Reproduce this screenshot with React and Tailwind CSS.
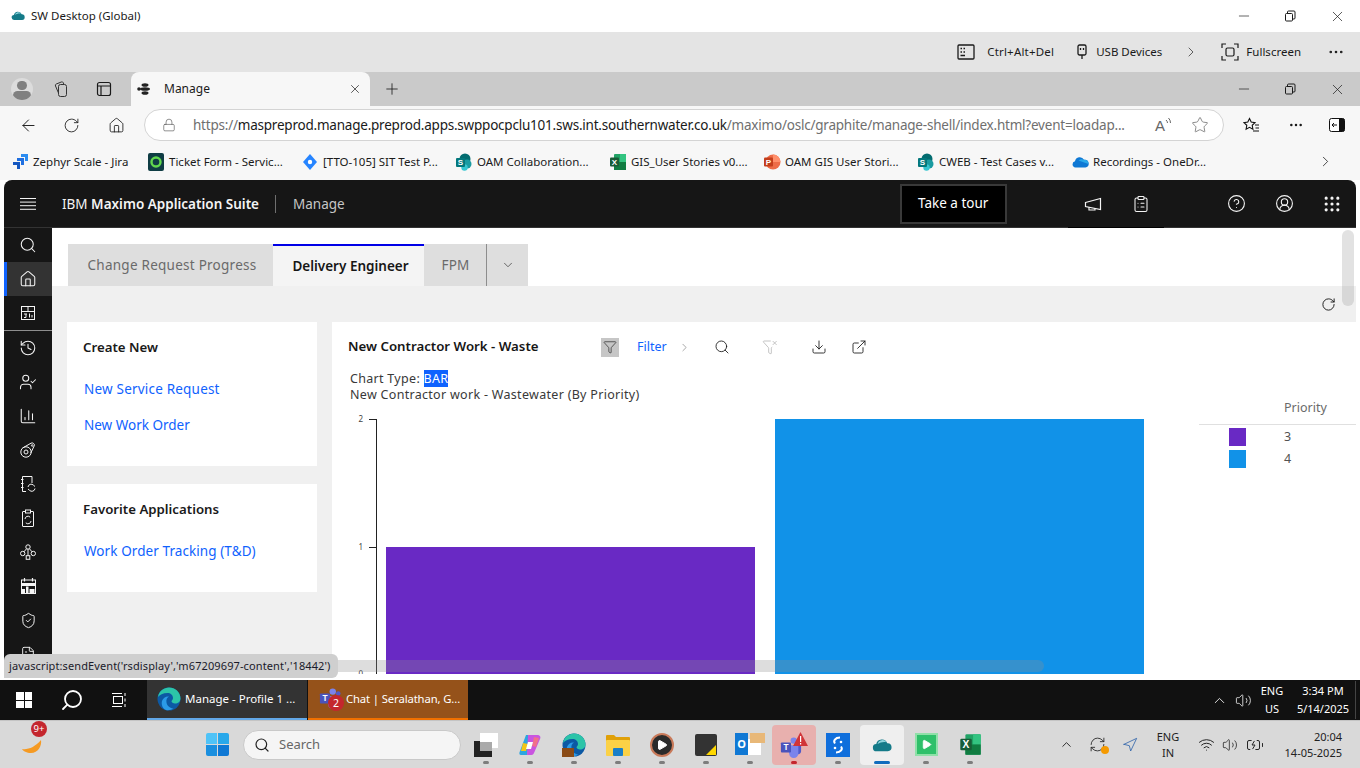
import React from 'react'
import {
  ArrowLeft, RotateCw, House, Lock, Star, Plus, X, Minus, ChevronRight, ChevronDown, ChevronUp,
  Ellipsis, Search, Filter, FunnelX, Download, ExternalLink, CircleHelp, CircleUserRound,
  Grip, ClipboardList, History, UserCheck, ChartColumn,
  ShieldCheck, FileText, Volume2, Wifi, Navigation, RefreshCw, BatteryCharging, Play,
} from 'lucide-react'

const thin = 1.4

// window restore glyph
const RestoreIcon = ({ className = '' }) => (
  <svg width="12" height="12" viewBox="0 0 12 12" fill="none" stroke="currentColor" className={className}>
    <rect x="1.5" y="3.5" width="7" height="7.5" rx="1" />
    <path d="M3.5 3.5V2a1 1 0 0 1 1-1H10a1 1 0 0 1 1 1v6a1 1 0 0 1-1 1H8.5" />
  </svg>
)

const WinButtons = ({ className = '' }) => (
  <div className={`flex items-center ${className}`}>
    <Minus size={16} strokeWidth={1} className="mr-[32px]" />
    <RestoreIcon className="mr-[33px]" />
    <X size={17} strokeWidth={1} />
  </div>
)

const SharePoint = () => (
  <svg width="18" height="18" viewBox="0 0 18 18">
    <circle cx="10" cy="6" r="5.5" fill="#036c70" />
    <circle cx="12" cy="11" r="4.5" fill="#1a9ba1" />
    <circle cx="9.5" cy="14.5" r="3.2" fill="#37c6d0" />
    <rect x="1" y="5" width="9" height="9" rx="1" fill="#03787c" />
    <text x="5.5" y="12.2" fontSize="8" fontWeight="700" fill="#fff" textAnchor="middle" fontFamily="Liberation Sans">S</text>
  </svg>
)

const ExcelIcon = ({ size = 18 }) => (
  <svg width={size} height={size} viewBox="0 0 18 18">
    <rect x="5" y="1" width="12" height="16" rx="1" fill="#21a366" />
    <rect x="11" y="1" width="6" height="8" fill="#33c481" />
    <rect x="5" y="9" width="12" height="8" fill="#107c41" />
    <rect x="1" y="4.5" width="9" height="9" rx="1" fill="#185c37" />
    <text x="5.5" y="12" fontSize="8" fontWeight="700" fill="#fff" textAnchor="middle" fontFamily="Liberation Sans">X</text>
  </svg>
)

const PptIcon = () => (
  <svg width="18" height="18" viewBox="0 0 18 18">
    <circle cx="10" cy="9" r="7.5" fill="#ed6c47" />
    <path d="M10 1.5A7.5 7.5 0 0 1 17.5 9H10z" fill="#ff8f6b" />
    <rect x="1" y="4.5" width="9" height="9" rx="1" fill="#c43e1c" />
    <text x="5.5" y="12" fontSize="8" fontWeight="700" fill="#fff" textAnchor="middle" fontFamily="Liberation Sans">P</text>
  </svg>
)

const Bookmark = ({ icon, label, first }) => (
  <div className={`flex items-center shrink-0 ${first ? 'w-[136px]' : 'w-[154px]'}`}>
    <div className="w-[18px] h-[18px] mr-[4px] flex items-center justify-center shrink-0">{icon}</div>
    <span className="text-[11.5px] text-[#1a1a1a] whitespace-nowrap">{label}</span>
  </div>
)

const bookmarks = [
  {
    label: 'Zephyr Scale - Jira',
    icon: (
      <svg width="17" height="17" viewBox="0 0 17 17" fill="#1f6fe0">
        <path d="M9 1h7v7h-3V4H9z" fill="#2b8cf0" />
        <path d="M5 5h7v7H9V8H5z" />
        <path d="M1 9h7v7H5v-4H1z" fill="#1557c0" />
      </svg>
    ),
  },
  {
    label: 'Ticket Form - Servic...',
    icon: (
      <svg width="16" height="18" viewBox="0 0 16 18">
        <rect width="16" height="18" rx="2" fill="#0f3d44" />
        <circle cx="8" cy="9" r="4.5" fill="none" stroke="#62d84e" strokeWidth="2.4" />
      </svg>
    ),
  },
  {
    label: '[TTO-105] SIT Test P...',
    icon: (
      <svg width="16" height="18" viewBox="0 0 16 18">
        <path d="M8 1l7 8-7 8-7-8z" fill="#2684ff" />
        <circle cx="8" cy="9" r="2.2" fill="#fff" />
      </svg>
    ),
  },
  { label: 'OAM Collaboration...', icon: <SharePoint /> },
  { label: 'GIS_User Stories v0....', icon: <ExcelIcon /> },
  { label: 'OAM GIS User Stori...', icon: <PptIcon /> },
  { label: 'CWEB - Test Cases v...', icon: <SharePoint /> },
  {
    label: 'Recordings - OneDr...',
    icon: (
      <svg width="17" height="12" viewBox="0 0 17 12">
        <path d="M3.5 11.5A3.2 3.2 0 0 1 3 5.2 4.8 4.8 0 0 1 12 3.8a3.9 3.9 0 0 1 1.5 7.7z" fill="#0f78d4" />
        <path d="M6.5 4.5A4.8 4.8 0 0 1 12 3.8 3.9 3.9 0 0 1 16.5 8z" fill="#29a8ea" />
      </svg>
    ),
  },
]

const sideTop = [
  <Search size={18} strokeWidth={thin} />,
  <House size={18} strokeWidth={thin} />,
  <svg width="16" height="16" viewBox="0 0 16 16" fill="none" stroke="currentColor">
    <rect x="1.5" y="1.5" width="13" height="13" />
    <path d="M1.5 6.5h13M8 1.5v5" />
    <path d="M4 9h3M6 9v3.5H4M9.5 8.5v4M12 10v2.5" />
  </svg>,
]

const GearCam = () => (
  <svg width="18" height="18" viewBox="0 0 18 18" fill="none" stroke="currentColor">
    <circle cx="7" cy="11" r="5.2" />
    <circle cx="7" cy="11" r="2" />
    <path d="M3.5 7L12 2.2a2.3 2.3 0 0 1 3.4 2.2L11.8 12" />
    <circle cx="13.2" cy="4.5" r="0.8" />
  </svg>
)

const BookSync = () => (
  <svg width="16" height="18" viewBox="0 0 16 18" fill="none" stroke="currentColor">
    <path d="M6 16.5H2.5v-15H12V8" />
    <path d="M1 4.5h2.5M1 8.5h2.5M1 12.5h2.5" />
    <path d="M8 12a3.2 3.2 0 0 1 5.5-1.8L15 11.5M15 13.5a3.2 3.2 0 0 1-5.5 1.8L8 14" />
  </svg>
)

const ClipSync = () => (
  <svg width="14" height="18" viewBox="0 0 14 18" fill="none" stroke="currentColor">
    <rect x="1.5" y="2.5" width="11" height="15" rx="0.5" />
    <rect x="4.5" y="1" width="5" height="3" fill="#161616" />
    <path d="M4 10a3 3 0 0 1 5.2-1.8M10 12a3 3 0 0 1-5.2 1.8" />
  </svg>
)

// org tree: circles around a small square
const TreeIcon = () => (
  <svg width="16" height="16" viewBox="0 0 16 16" fill="none" stroke="currentColor">
    <circle cx="8" cy="3" r="2.2" />
    <circle cx="2.7" cy="9.5" r="2.2" />
    <circle cx="13.3" cy="9.5" r="2.2" />
    <rect x="6.200" y="11.700" width="3.600" height="3.600" />
    <path d="M6.500 4.800L4 7.800M9.500 4.800L12 7.800M8 5.200v6.500" />
  </svg>
)

// calendar with filled cells
const CalFilled = () => (
  <svg width="15" height="16" viewBox="0 0 15 16">
    <rect x="0.500" y="2" width="14" height="13.500" fill="none" stroke="#f4f4f4" />
    <path d="M3.500 0v3.500M11.500 0v3.500" stroke="#f4f4f4" strokeWidth="1.200" />
    <path d="M1 5h13v3H1zM1 11h3v4H1zM5 8.500h2.500V15H5zM8.500 11h5v4h-5z" fill="#f4f4f4" />
  </svg>
)

const sideBottom = [
  <History size={18} strokeWidth={thin} />,
  <UserCheck size={18} strokeWidth={thin} />,
  <ChartColumn size={18} strokeWidth={thin} />,
  <GearCam />,
  <BookSync />,
  <ClipSync />,
  <TreeIcon />,
  <CalFilled />,
  <ShieldCheck size={17} strokeWidth={thin} />,
  <FileText size={16} strokeWidth={thin} />,
]

const SideItem = ({ children, active }) => (
  <div className={`h-[34px] flex items-center justify-center text-[#f4f4f4] ${active ? 'bg-[#333333] border-l-[3px] border-[#0f62fe] pr-[3px]' : ''}`}>
    {children}
  </div>
)

const TrayDot = ({ red, blue }) => (
  <span className={`absolute left-1/2 -translate-x-1/2 bottom-[1px] h-[3px] rounded-full ${red ? 'w-[6px] bg-[#c4262e]' : blue ? 'w-[16px] bg-[#0f6cbd]' : 'w-[6px] bg-[#7d7d7d]'}`} />
)

const Pinned = ({ children, tint, active, red, blue }) => (
  <div className={`relative w-[44px] h-[40px] flex items-center justify-center rounded-[4px] ${tint ? 'bg-[#e8b0ae]' : ''} ${active ? 'bg-[#efefef]' : ''}`}>
    {children}
    <TrayDot red={red} blue={blue} />
  </div>
)

const EdgeLogo = ({ size = 24 }) => (
  <svg width={size} height={size} viewBox="0 0 24 24">
    <circle cx="12" cy="12" r="11.5" fill="#0c59a4" />
    <path d="M1 10C2 4 7 .5 12 .5c6 0 11.5 4.5 11.5 11 0 3-2.5 5-5.5 5-2 0-3.5-1-3.5-2.2 0-1 1.5-1.3 1.5-3.3C16 8 13.5 6 10.5 6 6 6 2.5 8 1 10z" fill="#2cc4a8" />
    <path d="M9 23c-3-1-5-5-4-9 1-3 4-5 7-4.5-2 1-3 3-2.5 6 .5 3.500 4 6 7 6-2 1.500-5 2-7.500 1.500z" fill="#2b9be8" />
  </svg>
)

const TeamsIcon = ({ size = 24 }) => (
  <svg width={size} height={size} viewBox="0 0 24 24">
    <circle cx="15" cy="5" r="3.5" fill="#7b83eb" />
    <circle cx="21" cy="7" r="2.500" fill="#5059c9" />
    <path d="M18 10h5v7a3 3 0 0 1-5 2z" fill="#5059c9" />
    <path d="M8 10h12v9a5 5 0 0 1-10 0z" fill="#7b83eb" />
    <rect x="1" y="7" width="11" height="11" rx="1" fill="#4b53bc" />
    <text x="6.5" y="15.800" fontSize="9" fontWeight="700" fill="#fff" textAnchor="middle" fontFamily="Liberation Sans">T</text>
  </svg>
)

const WinLogo = ({ size, gradient }) => (
  <div className="grid grid-cols-2 gap-[1px]" style={{ width: size, height: size }}>
    <span className={gradient ? 'bg-[#4fc3f7] rounded-tl-[2px]' : 'bg-white'} />
    <span className={gradient ? 'bg-[#29a8ea] rounded-tr-[2px]' : 'bg-white'} />
    <span className={gradient ? 'bg-[#1a8fdf] rounded-bl-[2px]' : 'bg-white'} />
    <span className={gradient ? 'bg-[#0f78d4] rounded-br-[2px]' : 'bg-white'} />
  </div>
)

const SwCloud = ({ w = 22 }) => (
  <svg width={w} height={w * 0.8} viewBox="0 0 22 18">
    <path d="M5 16a4 4 0 0 1-.5-8A6.500 6.500 0 0 1 17 7a4.500 4.500 0 0 1 .5 9z" fill="#147a88" />
    <path d="M6 8a5.500 5.500 0 0 1 10-2c-3-1-7 0-10 2z" fill="#8fd4dd" />
  </svg>
)

export default function App() {
  return (
    <div className="relative w-[1360px] h-[768px] overflow-hidden bg-white flex flex-col font-['Noto_Sans',sans-serif] text-[#1a1a1a]">
      {/* remote desktop title */}
      <div className="h-[32px] shrink-0 flex items-center pl-[11px] pr-[14px] bg-white">
        <div className="w-[14px] h-[14px] mr-[6px] flex items-center">
          <SwCloud w={14} />
        </div>
        <span className="text-[11.5px]">SW Desktop (Global)</span>
        <WinButtons className="ml-auto" />
      </div>

      {/* remote desktop toolbar */}
      <div className="h-[40px] shrink-0 bg-[#e4e4e4] flex items-center justify-end text-[11.5px] pr-[15px]">
        <svg width="18" height="16" viewBox="0 0 18 16" fill="none" stroke="currentColor" strokeWidth="1.300" className="mr-[12px]">
          <rect x="1" y="1" width="16" height="14" rx="1" />
          <path d="M3.500 4.500h1.500M6.500 4.500H8M3.500 8h1.500M6.500 8H8M3.500 11.500H8" />
        </svg>
        <span className="mr-[23px] tracking-[0.2px]">Ctrl+Alt+Del</span>
        <svg width="10" height="16" viewBox="0 0 10 16" fill="none" stroke="currentColor" strokeWidth="1.300" className="mr-[9px]">
          <rect x="1" y="1" width="8" height="10" rx="1.500" />
          <path d="M3.500 4v2M6.500 4v2M5 11v4" />
        </svg>
        <span className="mr-[21px]">USB Devices</span>
        <ChevronRight size={16} strokeWidth={1} className="mr-[22px]" />
        <svg width="18" height="18" viewBox="0 0 18 18" fill="none" stroke="currentColor" strokeWidth="1.200" className="mr-[7px]">
          <path d="M1 5V1h4M13 1h4v4M1 13v4h4M13 17h4v-4" />
          <rect x="5" y="5" width="8" height="8" rx="1.500" />
        </svg>
        <span className="mr-[26px]">Fullscreen</span>
        <Ellipsis size={18} strokeWidth={1.500} />
      </div>

      {/* edge tab strip */}
      <div className="h-[34px] shrink-0 bg-[#cacaca] flex items-end pl-[11px] pr-[14px]">
        <div className="h-[34px] flex items-center">
          <div className="w-[22px] h-[22px] rounded-full bg-[#dcdcdc] overflow-hidden flex flex-col items-center">
            <span className="w-[10px] h-[10px] rounded-full bg-[#808080] mt-[3px]" />
            <span className="w-[18px] h-[10px] rounded-full bg-[#808080] mt-[1px]" />
          </div>
          <svg width="18" height="18" viewBox="0 0 18 18" fill="none" stroke="#333" className="ml-[20px]">
            <rect x="5.500" y="4.500" width="8" height="12" rx="2" />
            <path d="M5.500 13L2.500 6a1.500 1.500 0 0 1 .8-2l5-2a1.500 1.500 0 0 1 2 .8l.6 1.500" />
          </svg>
          <svg width="16" height="16" viewBox="0 0 16 16" fill="none" stroke="#1a1a1a" strokeWidth="1.200" className="ml-[25px]">
            <rect x="1.500" y="1.500" width="13" height="13" rx="2" />
            <path d="M1.500 5h13M5 5v9.500" />
          </svg>
        </div>
        <div className="ml-[19px] w-[239px] h-[34px] bg-[#f7f7f7] rounded-t-[8px] flex items-center pl-[6px] pr-[8px]">
          <svg width="16" height="14" viewBox="0 0 16 14" fill="#222" className="mr-[11px]">
            <ellipse cx="8" cy="3" rx="3.500" ry="1.800" />
            <ellipse cx="8" cy="7" rx="5" ry="1.800" />
            <ellipse cx="8" cy="11" rx="3.500" ry="1.800" />
            <circle cx="2" cy="7" r="1.800" />
          </svg>
          <span className="text-[12px]">Manage</span>
          <X size={14} strokeWidth={1.200} className="ml-auto" />
        </div>
        <div className="h-[34px] flex items-center ml-[13px]">
          <Plus size={18} strokeWidth={1.100} />
        </div>
        <div className="h-[34px] flex items-center ml-auto">
          <WinButtons />
        </div>
      </div>

      {/* address bar */}
      <div className="h-[38px] shrink-0 bg-[#f7f7f7] flex items-center pl-[19px]">
        <ArrowLeft size={19} strokeWidth={1.200} className="mr-[25px]" />
        <RotateCw size={17} strokeWidth={1.200} className="mr-[28px]" />
        <House size={17} strokeWidth={1.200} className="mr-[19px]" />
        <div className="w-[1080px] h-[32px] rounded-full bg-white border border-[#d4d4d4] flex items-center pl-[17px] pr-[14px]">
          <Lock size={14} strokeWidth={1.100} className="text-[#555] mr-[17px] shrink-0" />
          <div className="text-[13.5px] whitespace-nowrap text-[#6f6f6f] tracking-[-0.22px]">
            https://<span className="text-[#1a1a1a]">maspreprod.manage.preprod.apps.swppocpclu101.sws.int.southernwater.co.uk</span>/maximo/oslc/graphite/manage-shell/index.html?event=loadap...
          </div>
          <div className="ml-auto flex items-center shrink-0 text-[#666]">
            <span className="text-[15px] leading-none font-['Liberation_Sans',sans-serif]">A</span>
            <svg width="7" height="12" viewBox="0 0 7 12" fill="none" stroke="currentColor" className="mb-[4px] mr-[19px]">
              <path d="M1 3a4 4 0 0 1 1.500 3M3.500 1a7 7 0 0 1 2 5" />
            </svg>
            <Star size={18} strokeWidth={1} />
          </div>
        </div>
        <div className="flex items-center ml-[19px]">
          <svg width="17" height="17" viewBox="0 0 17 17" fill="none" stroke="#111" strokeWidth="1.100" className="mr-[28px]">
            <path d="M6.500 1.500l1.700 3.600 3.800.5-2.800 2.700.7 3.900-3.400-1.900-3.400 1.900.7-3.900L1 5.600l3.800-.5z" />
            <path d="M12 8h4M12.500 11h3.500M10 14h6" />
          </svg>
          <Ellipsis size={16} strokeWidth={1.800} className="mr-[25px]" />
          <svg width="16" height="14" viewBox="0 0 16 14">
            <rect x="0.500" y="0.500" width="15" height="13" rx="2" fill="#fff" stroke="#111" />
            <path d="M10 0.500h4a1.500 1.500 0 0 1 1.500 1.500v10a1.500 1.500 0 0 1-1.500 1.500h-4z" fill="#111" />
            <path d="M3 7h5M5 5L3 7l2 2" fill="none" stroke="#111" />
          </svg>
        </div>
      </div>

      {/* bookmarks */}
      <div className="h-[36px] shrink-0 bg-[#f7f7f7] flex items-center pl-[11px] pb-[1px]">
        {bookmarks.map((b, i) => (
          <Bookmark key={b.label} icon={b.icon} label={b.label} first={i === 0} />
        ))}
        <ChevronRight size={17} strokeWidth={1.100} className="ml-[92px]" />
      </div>

      {/* the Maximo window */}
      <div className="h-[494px] shrink-0 px-[4px] bg-white">
        <div className="h-[48px] bg-[#161616] rounded-t-[8px] flex items-center text-[#f4f4f4] border-b border-[#333333]">
          <div className="w-[48px] flex justify-center">
            <svg width="16" height="12" viewBox="0 0 16 12" stroke="currentColor">
              <path d="M0 .5h16M0 4.100h16M0 7.700h16M0 11.300h16" />
            </svg>
          </div>
          <div className="ml-[10px] text-[13.5px] pt-[1px]">
            IBM <span className="font-semibold">Maximo Application Suite</span>
          </div>
          <div className="w-px h-[18px] bg-[#6f6f6f] mx-[16px]" />
          <div className="text-[13.5px] pt-[1px] ml-px text-[#c6c6c6]">Manage</div>
          <div className="ml-[555px] w-[107px] h-[40px] bg-black border-2 border-[#393939] flex items-center justify-center text-[13.5px] text-white">
            Take a tour
          </div>
          <svg width="18" height="14" viewBox="0 0 18 14" fill="none" stroke="currentColor" strokeWidth="1.200" className="ml-[77px]">
            <path d="M1.500 5.500L16.500 1.500V12.500L1.500 9.500z" />
            <path d="M5 10.300V13h6v-1.800" />
          </svg>
          <ClipboardList size={18} strokeWidth={thin} className="ml-[30px]" />
          <CircleHelp size={19} strokeWidth={thin} className="ml-[77px]" />
          <CircleUserRound size={19} strokeWidth={thin} className="ml-[29px]" />
          <Grip size={20} strokeWidth={1.800} className="ml-[28px]" />
        </div>

        <div className="h-[446px] flex overflow-hidden">
          <div className="w-[48px] shrink-0 bg-[#161616]">
            <div className="border-b border-[#8d8d8d]">
              {sideTop.map((icon, i) => (
                <SideItem key={i} active={i === 1}>{icon}</SideItem>
              ))}
            </div>
            {sideBottom.map((icon, i) => (
              <SideItem key={i}>{icon}</SideItem>
            ))}
          </div>

          <div className="flex-1 min-w-0 flex flex-col">
            {/* page tabs */}
            <div className="h-[58px] shrink-0 pt-[16px] pl-[16px] bg-white flex">
              <div className="w-[205px] pl-[3px] bg-[#dedede] flex items-center justify-center text-[13.5px] text-[#6a6a6a] tracking-[0.25px]">
                Change Request Progress
              </div>
              <div className="w-[151px] pl-[4px] bg-[#f4f4f4] border-t-2 border-[#0000e6] flex items-center justify-center text-[13.5px] font-semibold text-[#161616]">
                Delivery Engineer
              </div>
              <div className="w-[62px] pl-px bg-[#dedede] flex items-center justify-center text-[13.5px] text-[#6a6a6a] tracking-[0.2px]">
                FPM
              </div>
              <div className="w-[42px] bg-[#dedede] border-l border-[#8d8d8d] flex items-center justify-center text-[#333]">
                <ChevronDown size={14} strokeWidth={1.200} />
              </div>
            </div>
            {/* refresh strip */}
            <div className="h-[36px] shrink-0 bg-[#f0f0f0] flex items-center justify-end pr-[20px]">
              <RotateCw size={15} strokeWidth={1.500} className="text-[#161616]" />
            </div>

            <div className="flex-1 min-h-0 flex">
              <div className="w-[280px] shrink-0 bg-[#f0f0f0] pl-[15px] pr-[15px] flex flex-col gap-[18px]">
                <div className="h-[144px] bg-white pl-[16px] pt-[17px]">
                  <div className="text-[13.25px] font-semibold leading-[16px]">Create New</div>
                  <div className="mt-[26px] ml-px text-[13.5px] leading-[16px] text-[#0f62fe] tracking-[0.2px]">New Service Request</div>
                  <div className="mt-[20px] ml-px text-[13.5px] leading-[16px] text-[#0f62fe]">New Work Order</div>
                </div>
                <div className="h-[108px] bg-white pl-[16px] pt-[17px]">
                  <div className="text-[13.25px] font-semibold leading-[16px]">Favorite Applications</div>
                  <div className="mt-[26px] ml-px text-[13.5px] leading-[16px] text-[#0f62fe] tracking-[0.08px]">Work Order Tracking (T&amp;D)</div>
                </div>
              </div>

              <div className="flex-1 min-w-0 bg-white">
                <div className="h-[50px] flex items-center pl-[16px]">
                  <div className="w-[253px] text-[13.25px] font-semibold text-[#161616] whitespace-nowrap">New Contractor Work - Waste</div>
                  <div className="w-[18px] h-[19px] bg-[#c6c6c6] flex items-center justify-center">
                    <Filter size={14} strokeWidth={1.100} />
                  </div>
                  <span className="ml-[18px] text-[12.5px] text-[#0f62fe]">Filter</span>
                  <ChevronRight size={13} strokeWidth={1.400} className="ml-[11px] text-[#8d8d8d]" />
                  <Search size={16} strokeWidth={1.300} className="ml-[23px]" />
                  <FunnelX size={16} strokeWidth={1} className="ml-[32px] text-[#a8a8a8]" />
                  <Download size={16} strokeWidth={1.300} className="ml-[33px]" />
                  <ExternalLink size={16} strokeWidth={1.300} className="ml-[24px]" />
                </div>
                <div className="-mt-px pl-[18px] text-[12.5px] leading-[16px] text-[#393939] h-[32px] tracking-[0.3px]">
                  <div>Chart Type: <span className="bg-[#0f62fe] text-white">BAR</span></div>
                  <div>New Contractor work - Wastewater (By Priority)</div>
                </div>
                <div className="flex mt-[9px]">
                  <svg width="867" height="262" viewBox="0 0 867 262" className="shrink-0">
                    <path d="M44.500 7V262M37 7.500h7.500M37 135.500h7.500" fill="none" stroke="#222" />
                    <text x="31" y="10" fontSize="8" fill="#444" textAnchor="end" fontFamily="Noto Sans">2</text>
                    <text x="31" y="138" fontSize="8" fill="#444" textAnchor="end" fontFamily="Noto Sans">1</text>
                    <text x="31" y="265" fontSize="8" fill="#444" textAnchor="end" fontFamily="Noto Sans">0</text>
                    <rect x="54" y="135" width="369" height="127" fill="#6929c4" />
                    <rect x="443" y="7" width="369" height="255" fill="#1192e8" />
                  </svg>
                  <div className="flex-1 min-w-0 -mt-[13px]">
                    <div className="h-[26px] pl-[85px] border-b border-[#e0e0e0] text-[12.5px] text-[#6a6a6a]">Priority</div>
                    <div className="mt-[1px] pl-[30px] flex items-center h-[22px] text-[12.5px] text-[#525252]">
                      <span className="w-[17px] h-[18px] bg-[#6929c4] mr-[38px]" />3
                    </div>
                    <div className="pl-[30px] flex items-center h-[22px] text-[12.5px] text-[#525252]">
                      <span className="w-[17px] h-[18px] bg-[#1192e8] mr-[38px]" />4
                    </div>
                  </div>
                </div>
              </div>
            </div>
          </div>
        </div>
      </div>

      {/* spacer under the window */}
      <div className="h-[6px] shrink-0 bg-white" />

      {/* inner taskbar */}
      <div className="h-[40px] shrink-0 bg-[#111111] flex items-stretch text-white">
        <div className="flex items-center pl-[16px]">
          <WinLogo size={16} />
          <Search size={24} strokeWidth={1.800} className="ml-[28px] -scale-x-100" />
          <svg width="16" height="16" viewBox="0 0 16 16" fill="none" stroke="#fff" className="ml-[28px]">
            <rect x="1.500" y="4.500" width="9" height="7" />
            <path d="M0 1.500h10M0 14.500h10M13 1v3M13 6.500v3M13 12v3" />
          </svg>
        </div>
        <div className="ml-[19px] w-[160px] bg-[#333333] border-b-2 border-[#62a8e8] flex items-center pl-[10px]">
          <EdgeLogo size={24} />
          <span className="ml-[4px] text-[11.5px] whitespace-nowrap">Manage - Profile 1 ...</span>
        </div>
        <div className="ml-px w-[160px] bg-[#95521a] border-b-2 border-[#f07000] flex items-center pl-[11px]">
          <div className="relative w-[24px] h-[24px] shrink-0">
            <TeamsIcon size={22} />
            <span className="absolute left-[9px] top-[8px] w-[16px] h-[16px] rounded-full bg-[#c4262e] text-[10.5px] leading-[16px] text-center">2</span>
          </div>
          <span className="ml-[3px] text-[11.25px] tracking-[-0.1px] whitespace-nowrap">Chat | Seralathan, G...</span>
        </div>
        <div className="ml-auto flex items-center pr-[5px] border-r border-[#444] my-[1px] mr-[4px]">
          <ChevronUp size={17} strokeWidth={1.200} />
          <Volume2 size={17} strokeWidth={1.100} className="ml-[7px]" />
          <div className="ml-[5px] w-[30px] text-center text-[11px] leading-[18px]">ENG<br />US</div>
          <div className="ml-[9px] w-[54px] text-center text-[11px] leading-[18px]">3:34 PM<br />5/14/2025</div>
        </div>
      </div>

      {/* outer windows taskbar */}
      <div className="h-[48px] shrink-0 bg-[#d9d9d9] border-t border-[#c4c4c4] flex items-center text-[#222]">
        <div className="relative ml-[20px] w-[24px] h-[24px] -mt-[2px]">
          <svg width="24" height="24" viewBox="0 0 24 24">
            <path d="M21 8c1 6-3 13-10 13-4 0-8-2-9-4 6 1 13-2 19-9z" fill="#f59a23" />
          </svg>
          <span className="absolute left-[11px] -top-[11px] w-[16px] h-[16px] rounded-full bg-[#c4262e] text-white text-[9.500px] leading-[16px] text-center">9+</span>
        </div>
        <div className="ml-[162px]">
          <WinLogo size={23} gradient />
        </div>
        <div className="ml-[14px] w-[218px] h-[30px] rounded-full bg-[#f5f5f5] border border-[#c9c9c9] flex items-center pl-[10px]">
          <Search size={16} strokeWidth={1.800} className="text-[#222]" />
          <span className="ml-[9px] text-[13px] text-[#666]">Search</span>
        </div>

        <div className="ml-[3px] flex items-center">
          <Pinned>
            <div className="relative w-[24px] h-[24px]">
              <span className="absolute left-0 bottom-0 w-[18px] h-[16px] bg-[#222]" />
              <span className="absolute right-0 top-0 w-[18px] h-[15px] bg-white" />
              <span className="absolute left-[6px] top-[9px] w-[12px] h-[9px] bg-[#aaa]" />
            </div>
          </Pinned>
          <Pinned>
            <svg width="24" height="24" viewBox="0 0 24 24">
              <path d="M8 2h6l-5 20H3c-2 0-2-2-1-4z" fill="#2ca6e0" />
              <path d="M10 2h9c3 0 4 2 3 4l-6 14c-1 2-2 2-4 2H9z" fill="#c955e0" />
              <path d="M5 10l5 1-2 7H3z" fill="#f5c518" />
              <path d="M16 4l5 1-3 9-4-1z" fill="#f0718a" />
              <path d="M10 9h5l-2 7H8z" fill="#fff" />
            </svg>
          </Pinned>
          <Pinned>
            <div className="relative w-[24px] h-[24px]">
              <EdgeLogo size={24} />
              <span className="absolute left-0 bottom-0 w-[12px] h-[9px] bg-[#8a4b16]" />
            </div>
          </Pinned>
          <Pinned>
            <svg width="24" height="22" viewBox="0 0 24 22">
              <path d="M0 2a1 1 0 0 1 1-1h7l2 2h13a1 1 0 0 1 1 1v3H0z" fill="#e0a008" />
              <rect y="6" width="24" height="16" rx="1" fill="#fbd146" />
              <rect x="7" y="14" width="10" height="8" rx="1" fill="#1a7fc8" />
            </svg>
          </Pinned>
          <Pinned>
            <div className="w-[24px] h-[24px] rounded-full bg-[#2b2b2b] border-2 border-[#c97a5a] flex items-center justify-center">
              <Play size={12} fill="#fff" stroke="#fff" />
            </div>
          </Pinned>
          <Pinned>
            <div className="relative w-[22px] h-[22px] rounded-[2px] bg-[#333333] overflow-hidden">
              <svg width="22" height="22" viewBox="0 0 22 22" className="absolute inset-0">
                <path d="M11 21L21 11v10z" fill="#ffd800" />
              </svg>
            </div>
          </Pinned>
          <Pinned>
            <div className="relative w-[30px] h-[24px]">
              <span className="absolute left-[6px] top-[6px] w-[20px] h-[16px] bg-white" />
              <span className="absolute left-0 top-0 w-[13px] h-[22px] bg-[#0f78d4] text-white text-[11px] font-bold text-center leading-[22px]">O</span>
              <span className="absolute right-0 top-0 w-[15px] h-[10px] bg-[#e8b878]" />
            </div>
          </Pinned>
          <Pinned tint red>
            <div className="relative w-[28px] h-[26px] flex items-end">
              <TeamsIcon size={22} />
              <svg width="15" height="14" viewBox="0 0 15 14" className="absolute right-0 top-0">
                <path d="M7.500 0L15 14H0z" fill="#d13438" />
                <path d="M7 4h1.200v6H7zM7 11h1.200v1.500H7z" fill="#fff" />
              </svg>
            </div>
          </Pinned>
          <Pinned>
            <svg width="24" height="24" viewBox="0 0 24 24">
              <rect width="24" height="24" fill="#0f6fdc" />
              <path d="M14 4.500C9 4.500 7 8 9 10.500M10 19.500c5 0 7-3.500 5-6" fill="none" stroke="#fff" strokeWidth="2" />
              <circle cx="15" cy="9" r="1.300" fill="#fff" />
              <circle cx="9" cy="15" r="1.300" fill="#fff" />
            </svg>
          </Pinned>
          <Pinned active blue>
            <SwCloud w={20} />
          </Pinned>
          <Pinned>
            <div className="w-[23px] h-[23px] bg-[#2fc06a] border-2 border-[#8fe0a8] flex items-center justify-center">
              <Play size={11} fill="#fff" stroke="#fff" />
            </div>
          </Pinned>
          <Pinned>
            <ExcelIcon size={23} />
          </Pinned>
        </div>

        <div className="ml-[67px] flex items-center text-[#222]">
          <ChevronUp size={15} strokeWidth={1.500} />
          <div className="relative ml-[15px]">
            <RefreshCw size={17} strokeWidth={1.200} />
            <span className="absolute right-[-3px] bottom-[-1px] w-[8px] h-[8px] rounded-full bg-[#f59a00]" />
          </div>
          <Navigation size={16} strokeWidth={1.200} className="ml-[16px] text-[#2a5fa8]" />
          <div className="ml-[13px] w-[34px] text-center text-[11px] leading-[16px]">ENG<br />IN</div>
          <Wifi size={17} strokeWidth={1.400} className="ml-[13px]" />
          <Volume2 size={16} strokeWidth={1.200} className="ml-[7px]" />
          <BatteryCharging size={18} strokeWidth={1.300} className="ml-[8px]" />
          <div className="ml-[10px] w-[68px] text-right text-[11px] leading-[16px]">20:04<br />14-05-2025</div>
        </div>
      </div>

      {/* overlays: header notch, status tooltip, scrollbars */}
      <div className="absolute left-[1068px] top-[227px] w-[96px] h-px bg-[#000000]" />
      <div className="absolute left-[52px] top-[660px] w-[992px] h-[12px] rounded-full bg-[#8d8d8d]/30" />
      <div className="absolute left-[1342px] top-[230px] w-[12px] h-[76px] rounded-full bg-[#8d8d8d]/25" />
      <div className="absolute left-[4px] top-[654px] h-[24px] w-[334px] rounded-r-[6px] rounded-tl-[6px] bg-[#cfcfcf] flex items-center pl-[5px] text-[11px] tracking-[0.11px] text-[#1a1a2a] whitespace-nowrap">
        javascript:sendEvent('rsdisplay','m67209697-content','18442')
      </div>
    </div>
  )
}
